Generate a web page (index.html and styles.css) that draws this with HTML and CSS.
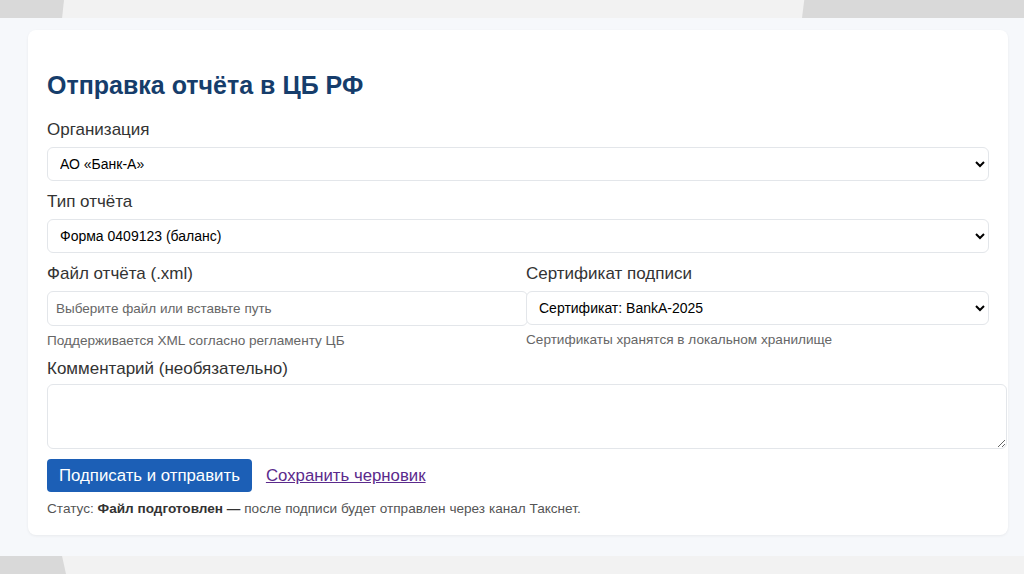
FILE: index.html
```html
<!DOCTYPE html>
<html lang="ru">
  <head>
    <meta charset="UTF-8" />
    <meta name="viewport" content="width=device-width, initial-scale=1.0" />
    <title>Отправка отчёта в ЦБ РФ</title>
    <link rel="stylesheet" href="styles.css">
  </head>
  <body>
    <div class="strip strip-top">
      <div class="tab tab-left"></div>
      <div class="tab tab-right"></div>
    </div>
    <div class="page">
      <div class="card">
        <h1>Отправка отчёта в ЦБ РФ</h1>
        <form id="reportForm" autocomplete="off">
          <div class="field">
            <label for="org">Организация</label>
            <select id="org">
              <option>АО «Банк-А»</option>
              <option>ПАО «Банк-Б»</option>
            </select>
          </div>
          <div class="field">
            <label for="type">Тип отчёта</label>
            <select id="type">
              <option>Форма 0409123 (баланс)</option>
              <option>Форма 0409101</option>
            </select>
          </div>
          <div class="field-row">
            <div class="field">
              <label for="file">Файл отчёта (.xml)</label>
              <input type="text" id="file" placeholder="Выберите файл или вставьте путь" />
              <div class="hint">Поддерживается XML согласно регламенту ЦБ</div>
            </div>
            <div class="field">
              <label for="cert">Сертификат подписи</label>
              <select id="cert">
                <option>Сертификат: BankA-2025</option>
              </select>
              <div class="hint">Сертификаты хранятся в локальном хранилище</div>
            </div>
          </div>
          <div class="field field-comment">
            <label for="comment">Комментарий (необязательно)</label>
            <textarea id="comment"></textarea>
          </div>
          <div class="actions">
            <button type="button" class="btn-primary">Подписать и отправить</button>
            <a href="#" class="link-draft">Сохранить черновик</a>
          </div>
          <p class="status">Статус: <b>Файл подготовлен —</b> после подписи будет отправлен через канал Такснет.</p>
        </form>
      </div>
    </div>
    <div class="strip strip-bottom">
      <div class="tab tab-left"></div>
    </div>
  </body>
</html>
```

FILE: styles.css
```css
/* Reset */
* {
  margin: 0;
  padding: 0;
  box-sizing: border-box;
}
body {
  font-family: "Liberation Sans", Arial, sans-serif;
  background: #f6f8fb;
  color: #333;
  height: 574px;
  overflow: hidden;
  display: flex;
  flex-direction: column;
}
.strip {
  height: 18px;
  background: #f2f2f2;
  display: flex;
  justify-content: space-between;
  flex-shrink: 0;
}
.tab {
  background: #d9d9d9;
  height: 100%;
}
.strip-top .tab-left {
  width: 64px;
  clip-path: polygon(0 0, 100% 0, 97% 100%, 0 100%);
}
.tab-right {
  width: 222px;
  clip-path: polygon(1% 0, 100% 0, 100% 100%, 0 100%);
}
.strip-bottom .tab-left {
  width: 66px;
  clip-path: polygon(0 0, 94% 0, 100% 100%, 0 100%);
}
.page {
  flex: 1;
  padding: 12px 16px 0 28px;
}
.card {
  background: #fff;
  border-radius: 8px;
  box-shadow: 0 1px 3px rgba(0, 0, 0, 0.06);
  padding: 20px 19px 19px;
  height: 505px;
}
h1 {
  font-size: 25px;
  line-height: 28px;
  font-weight: 700;
  color: #163d6b;
  margin: 21px 0 22px;
}
.field {
  margin-bottom: 12px;
}
.field-row {
  display: grid;
  grid-template-columns: 1fr 1fr;
  gap: 16px;
}
label {
  display: block;
  font-size: 17px;
  line-height: 18px;
  color: #333;
  margin-bottom: 8px;
}
.field-comment label {
  margin-bottom: 6px;
}
select {
  width: 100%;
  height: 34px;
  padding: 0 8px;
  border: 1px solid #e3e6ea;
  border-radius: 6px;
  background: #fff;
  font-family: "Liberation Sans", Arial, sans-serif;
  font-size: 14px;
  color: #000;
}
input[type="text"],
textarea {
  box-sizing: content-box;
  width: 100%;
  padding: 8px;
  border: 1px solid #e3e6ea;
  border-radius: 6px;
  font-family: "Liberation Sans", Arial, sans-serif;
  font-size: 13.5px;
  color: #111;
}
input[type="text"] {
  height: 17px;
}
input::placeholder {
  color: #666;
}
textarea {
  height: 47px;
  resize: vertical;
  display: block;
}
.hint {
  font-size: 13.6px;
  line-height: 15px;
  color: #666;
  margin-top: 7px;
}
.actions {
  display: flex;
  align-items: center;
  gap: 14px;
  margin-top: -2px;
}
.btn-primary {
  height: 33px;
  padding: 0 12px;
  background: #1c5fb6;
  color: #fff;
  border: none;
  border-radius: 4px;
  font-family: "Liberation Sans", Arial, sans-serif;
  font-size: 16.8px;
  cursor: pointer;
}
.link-draft {
  font-size: 16.8px;
  color: #5b2a8c;
}
.status {
  font-size: 13.6px;
  line-height: 15px;
  color: #555;
  margin-top: 9px;
}
.status b {
  color: #333;
}
```
